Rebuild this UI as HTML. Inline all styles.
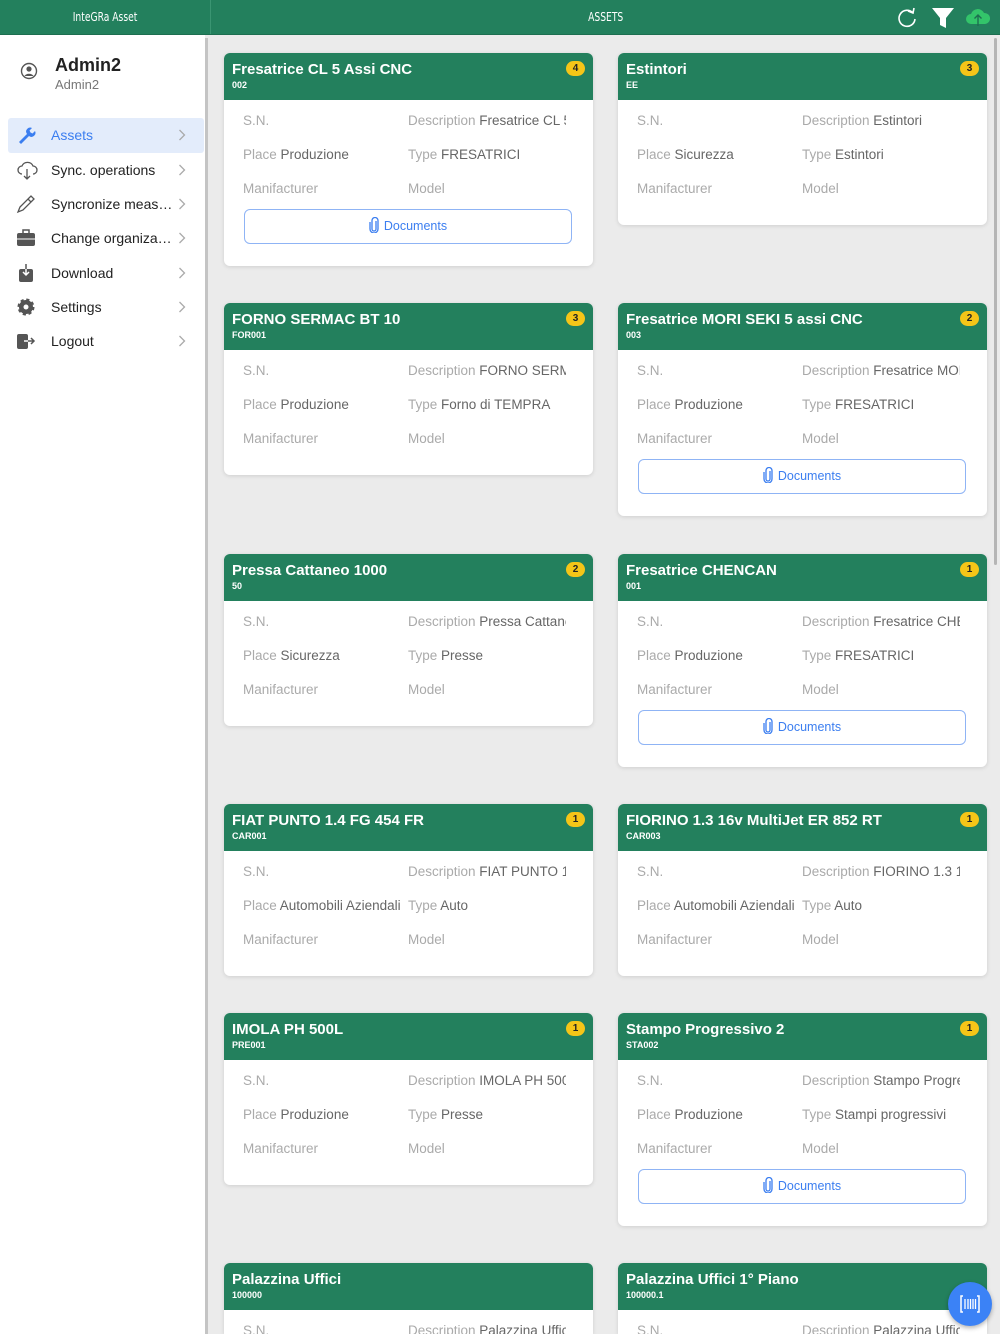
<!DOCTYPE html>
<html><head><meta charset="utf-8"><style>
*{box-sizing:border-box;margin:0;padding:0}
html,body{width:1000px;height:1334px;overflow:hidden}
body{background:#ebebeb;font-family:"Liberation Sans",sans-serif;position:relative}
.top{position:absolute;left:0;top:0;width:1000px;height:35px;background:#23805d;border-bottom:1px solid #1d6e50;z-index:2}
.top .l{position:absolute;left:0;width:211px;height:34px;border-right:1px solid #3a9572;color:#fff;font-size:12px;text-align:center;line-height:34px}
.top .l span{display:inline-block;transform:scaleX(.85);font-family:"DejaVu Sans Condensed","Liberation Sans Narrow",sans-serif}
.top .c{position:absolute;left:211px;right:0;text-align:center;color:#fff;font-size:11px;line-height:34px}
.top .c span{display:inline-block;transform:scaleX(.85);font-family:"DejaVu Sans Condensed",sans-serif;font-size:12px}
.side{position:absolute;left:0;top:35px;width:205px;height:1299px;background:#fff}
.sbar{position:absolute;left:205px;top:38px;width:3px;height:1296px;background:#c4c4c4}
.rbar{position:absolute;left:994px;top:38px;width:3px;height:527px;background:#b5b5b5;border-radius:2px}
.user{position:absolute;left:55px;top:55px}
.user b{font-size:18px;color:#222;display:block}
.user span{font-size:13px;color:#777}
.mi{position:absolute;left:8px;width:196px;height:34px;font-size:14px;color:#222;line-height:34px;padding-left:43px}
.mi.act{background:#e3ecfb;color:#3b7ef0;border-radius:3px}
.mi .ch{position:absolute;right:18px;top:11px}
.mi svg.ic{position:absolute;left:8px;top:7px}
.card{position:absolute;width:369px;background:#fff;border-radius:6px;box-shadow:0 1px 4px rgba(0,0,0,.12);overflow:hidden}
.hd{height:47px;background:#23805d;padding:8px 8px 0 8px;color:#fff;position:relative}
.hd b{font-size:15px;display:block}
.hd small{font-size:9px;font-weight:bold;display:block;margin-top:2px}
.bd{position:absolute;right:8px;top:8px;background:#f5c518;color:#222;font-size:10px;font-weight:bold;border-radius:8px;width:19px;height:15px;text-align:center;line-height:15px}
.row{position:absolute;font-size:13.5px;color:#666;white-space:nowrap;overflow:hidden}
.row i{font-style:normal;color:#aaa}
.doc{position:absolute;left:20px;width:328px;height:35px;border:1px solid #8fb4f5;border-radius:6px;color:#3b7ef0;font-size:12.5px;text-align:center;line-height:33px}
.doc svg{vertical-align:-3px;margin-right:5px}
.fab{position:absolute;left:948px;top:1282px;width:44px;height:44px;border-radius:50%;background:#3b82f6;box-shadow:0 2px 5px rgba(0,0,0,.3)}
</style></head><body>
<svg width="0" height="0" style="position:absolute"><defs>
<symbol id="clip" viewBox="0 0 10 16"><path d="M7 4v8a2 2 0 0 1-4 0V3.5a3 3 0 0 1 6 0V12a4 4 0 0 1-8 0V5" fill="none" stroke="#3b7ef0" stroke-width="1.3"/></symbol>
<symbol id="chev" viewBox="0 0 8 12"><path d="M1.5 1l5 5-5 5" fill="none" stroke="#aaa" stroke-width="1.3"/></symbol>
</defs></svg>
<div class="top"><div class="l"><span>InteGRa Asset</span></div><div class="c"><span>ASSETS</span></div>
<svg style="position:absolute;left:896px;top:7px" width="22" height="22" viewBox="0 0 22 22"><path d="M17 6A8 8 0 1 0 19 12" fill="none" stroke="#fff" stroke-width="1.6"/><path d="M12 4l5 2 1-5" fill="none" stroke="#fff" stroke-width="1.6"/></svg>
<svg style="position:absolute;left:931px;top:7px" width="24" height="22" viewBox="0 0 24 22"><path d="M1 1h22l-8 10v10l-6-3v-7z" fill="#fff"/></svg>
<svg style="position:absolute;left:964px;top:6px" width="28" height="22" viewBox="0 0 28 22"><path d="M7 18a5 5 0 0 1 0-10 7 7 0 0 1 13-1 5.5 5.5 0 0 1 1 11z" fill="#33c46a"/><path d="M14 20V9m-3.5 3.5L14 9l3.5 3.5" fill="none" stroke="#1d6e50" stroke-width="1.4"/></svg>
</div>
<div class="side">
<svg style="position:absolute;left:20px;top:27px" width="18" height="18" viewBox="0 0 18 18"><circle cx="9" cy="9" r="7.5" fill="none" stroke="#555" stroke-width="1.4"/><circle cx="9" cy="7" r="2.6" fill="#555"/><path d="M4.5 14a5 4 0 0 1 9 0" fill="#555"/></svg>
</div>
<div class="user"><b>Admin2</b><span>Admin2</span></div>
<div class="mi act" style="top:118px;height:35px">Assets<svg class="ch" width="8" height="12"><use href="#chev"/></svg><svg class="ic" width="20" height="20" viewBox="0 0 20 20"><path d="M3 17l8-8a4 4 0 0 1 5-6l-2.5 2.5 1 2 2 1L19 6a4 4 0 0 1-6 5l-8 8z" fill="#3b7ef0"/></svg></div>
<div class="mi" style="top:153px">Sync. operations<svg class="ch" width="8" height="12"><use href="#chev"/></svg><svg class="ic" width="22" height="20" viewBox="0 0 22 20"><path d="M6 14a4 4 0 0 1 0-8 6 6 0 0 1 11 0 4 4 0 0 1 0 8" fill="none" stroke="#555" stroke-width="1.3"/><path d="M11 9v10m-3-3l3 3 3-3" fill="none" stroke="#555" stroke-width="1.3"/></svg></div>
<div class="mi" style="top:187px">Syncronize meas…<svg class="ch" width="8" height="12"><use href="#chev"/></svg><svg class="ic" width="20" height="20" viewBox="0 0 20 20"><path d="M2 18l2-5 8-8 3 3-8 8zM12 5l3-3 3 3-3 3" fill="none" stroke="#555" stroke-width="1.3"/></svg></div>
<div class="mi" style="top:221px">Change organiza…<svg class="ch" width="8" height="12"><use href="#chev"/></svg><svg class="ic" width="20" height="20" viewBox="0 0 20 20"><rect x="1" y="5" width="18" height="13" rx="2" fill="#555"/><rect x="7" y="2" width="6" height="4" fill="none" stroke="#555" stroke-width="1.5"/><path d="M1 11h18" stroke="#fff"/></svg></div>
<div class="mi" style="top:256px">Download<svg class="ch" width="8" height="12"><use href="#chev"/></svg><svg class="ic" width="20" height="20" viewBox="0 0 20 20"><rect x="3" y="6" width="14" height="13" rx="2" fill="#555"/><path d="M10 1v11m-3-3l3 3 3-3" fill="none" stroke="#fff" stroke-width="1.5"/><path d="M10 1v5" stroke="#555" stroke-width="1.5"/></svg></div>
<div class="mi" style="top:290px">Settings<svg class="ch" width="8" height="12"><use href="#chev"/></svg><svg class="ic" width="20" height="20" viewBox="0 0 20 20"><circle cx="10" cy="10" r="7" fill="#555" stroke="#555" stroke-width="3" stroke-dasharray="3 2.5"/><circle cx="10" cy="10" r="2.5" fill="#fff"/></svg></div>
<div class="mi" style="top:324px">Logout<svg class="ch" width="8" height="12"><use href="#chev"/></svg><svg class="ic" width="20" height="20" viewBox="0 0 20 20"><rect x="1" y="3" width="11" height="15" rx="2" fill="#555"/><path d="M8 10h10m-3-3l3 3-3 3" fill="none" stroke="#555" stroke-width="1.5"/><path d="M8 10h4" stroke="#fff" stroke-width="1.5"/></svg></div>
<div class="sbar"></div>

<div class="card" style="left:224px;top:53px;height:213px"><div class="hd"><b>Fresatrice CL 5 Assi CNC</b><small>002</small><span class="bd">4</span></div>
<div class="row" style="left:19px;top:60px"><i>S.N.</i></div><div class="row" style="left:184px;top:60px;width:158px"><i>Description</i> Fresatrice CL 5</div>
<div class="row" style="left:19px;top:94px"><i>Place</i> Produzione</div><div class="row" style="left:184px;top:94px;width:158px"><i>Type</i> FRESATRICI</div>
<div class="row" style="left:19px;top:128px"><i>Manifacturer</i></div><div class="row" style="left:184px;top:128px"><i>Model</i></div>
<div class="doc" style="top:156px"><svg width="10" height="16"><use href="#clip"/></svg>Documents</div></div>

<div class="card" style="left:618px;top:53px;height:172px"><div class="hd"><b>Estintori</b><small>EE</small><span class="bd">3</span></div>
<div class="row" style="left:19px;top:60px"><i>S.N.</i></div><div class="row" style="left:184px;top:60px;width:158px"><i>Description</i> Estintori</div>
<div class="row" style="left:19px;top:94px"><i>Place</i> Sicurezza</div><div class="row" style="left:184px;top:94px;width:158px"><i>Type</i> Estintori</div>
<div class="row" style="left:19px;top:128px"><i>Manifacturer</i></div><div class="row" style="left:184px;top:128px"><i>Model</i></div></div>

<div class="card" style="left:224px;top:303px;height:172px"><div class="hd"><b>FORNO SERMAC BT 10</b><small>FOR001</small><span class="bd">3</span></div>
<div class="row" style="left:19px;top:60px"><i>S.N.</i></div><div class="row" style="left:184px;top:60px;width:158px"><i>Description</i> FORNO SERMAC</div>
<div class="row" style="left:19px;top:94px"><i>Place</i> Produzione</div><div class="row" style="left:184px;top:94px;width:158px"><i>Type</i> Forno di TEMPRA</div>
<div class="row" style="left:19px;top:128px"><i>Manifacturer</i></div><div class="row" style="left:184px;top:128px"><i>Model</i></div></div>

<div class="card" style="left:618px;top:303px;height:213px"><div class="hd"><b>Fresatrice MORI SEKI 5 assi CNC</b><small>003</small><span class="bd">2</span></div>
<div class="row" style="left:19px;top:60px"><i>S.N.</i></div><div class="row" style="left:184px;top:60px;width:158px"><i>Description</i> Fresatrice MORI</div>
<div class="row" style="left:19px;top:94px"><i>Place</i> Produzione</div><div class="row" style="left:184px;top:94px;width:158px"><i>Type</i> FRESATRICI</div>
<div class="row" style="left:19px;top:128px"><i>Manifacturer</i></div><div class="row" style="left:184px;top:128px"><i>Model</i></div>
<div class="doc" style="top:156px"><svg width="10" height="16"><use href="#clip"/></svg>Documents</div></div>

<div class="card" style="left:224px;top:554px;height:172px"><div class="hd"><b>Pressa Cattaneo 1000</b><small>50</small><span class="bd">2</span></div>
<div class="row" style="left:19px;top:60px"><i>S.N.</i></div><div class="row" style="left:184px;top:60px;width:158px"><i>Description</i> Pressa Cattaneo</div>
<div class="row" style="left:19px;top:94px"><i>Place</i> Sicurezza</div><div class="row" style="left:184px;top:94px;width:158px"><i>Type</i> Presse</div>
<div class="row" style="left:19px;top:128px"><i>Manifacturer</i></div><div class="row" style="left:184px;top:128px"><i>Model</i></div></div>

<div class="card" style="left:618px;top:554px;height:213px"><div class="hd"><b>Fresatrice CHENCAN</b><small>001</small><span class="bd">1</span></div>
<div class="row" style="left:19px;top:60px"><i>S.N.</i></div><div class="row" style="left:184px;top:60px;width:158px"><i>Description</i> Fresatrice CHEN</div>
<div class="row" style="left:19px;top:94px"><i>Place</i> Produzione</div><div class="row" style="left:184px;top:94px;width:158px"><i>Type</i> FRESATRICI</div>
<div class="row" style="left:19px;top:128px"><i>Manifacturer</i></div><div class="row" style="left:184px;top:128px"><i>Model</i></div>
<div class="doc" style="top:156px"><svg width="10" height="16"><use href="#clip"/></svg>Documents</div></div>

<div class="card" style="left:224px;top:804px;height:172px"><div class="hd"><b>FIAT PUNTO 1.4 FG 454 FR</b><small>CAR001</small><span class="bd">1</span></div>
<div class="row" style="left:19px;top:60px"><i>S.N.</i></div><div class="row" style="left:184px;top:60px;width:158px"><i>Description</i> FIAT PUNTO 1.4</div>
<div class="row" style="left:19px;top:94px"><i>Place</i> Automobili Aziendali</div><div class="row" style="left:184px;top:94px;width:158px"><i>Type</i> Auto</div>
<div class="row" style="left:19px;top:128px"><i>Manifacturer</i></div><div class="row" style="left:184px;top:128px"><i>Model</i></div></div>

<div class="card" style="left:618px;top:804px;height:172px"><div class="hd"><b>FIORINO 1.3 16v MultiJet ER 852 RT</b><small>CAR003</small><span class="bd">1</span></div>
<div class="row" style="left:19px;top:60px"><i>S.N.</i></div><div class="row" style="left:184px;top:60px;width:158px"><i>Description</i> FIORINO 1.3 16v</div>
<div class="row" style="left:19px;top:94px"><i>Place</i> Automobili Aziendali</div><div class="row" style="left:184px;top:94px;width:158px"><i>Type</i> Auto</div>
<div class="row" style="left:19px;top:128px"><i>Manifacturer</i></div><div class="row" style="left:184px;top:128px"><i>Model</i></div></div>

<div class="card" style="left:224px;top:1013px;height:172px"><div class="hd"><b>IMOLA PH 500L</b><small>PRE001</small><span class="bd">1</span></div>
<div class="row" style="left:19px;top:60px"><i>S.N.</i></div><div class="row" style="left:184px;top:60px;width:158px"><i>Description</i> IMOLA PH 500L</div>
<div class="row" style="left:19px;top:94px"><i>Place</i> Produzione</div><div class="row" style="left:184px;top:94px;width:158px"><i>Type</i> Presse</div>
<div class="row" style="left:19px;top:128px"><i>Manifacturer</i></div><div class="row" style="left:184px;top:128px"><i>Model</i></div></div>

<div class="card" style="left:618px;top:1013px;height:213px"><div class="hd"><b>Stampo Progressivo 2</b><small>STA002</small><span class="bd">1</span></div>
<div class="row" style="left:19px;top:60px"><i>S.N.</i></div><div class="row" style="left:184px;top:60px;width:158px"><i>Description</i> Stampo Progressivo</div>
<div class="row" style="left:19px;top:94px"><i>Place</i> Produzione</div><div class="row" style="left:184px;top:94px;width:158px"><i>Type</i> Stampi progressivi</div>
<div class="row" style="left:19px;top:128px"><i>Manifacturer</i></div><div class="row" style="left:184px;top:128px"><i>Model</i></div>
<div class="doc" style="top:156px"><svg width="10" height="16"><use href="#clip"/></svg>Documents</div></div>

<div class="card" style="left:224px;top:1263px;height:71px;border-radius:6px 6px 0 0"><div class="hd"><b>Palazzina Uffici</b><small>100000</small></div>
<div class="row" style="left:19px;top:60px"><i>S.N.</i></div><div class="row" style="left:184px;top:60px;width:158px"><i>Description</i> Palazzina Uffici</div></div>

<div class="card" style="left:618px;top:1263px;height:71px;border-radius:6px 6px 0 0"><div class="hd"><b>Palazzina Uffici 1° Piano</b><small>100000.1</small></div>
<div class="row" style="left:19px;top:60px"><i>S.N.</i></div><div class="row" style="left:184px;top:60px;width:158px"><i>Description</i> Palazzina Uffici</div></div>

<div class="rbar"></div>
<div class="fab"><svg style="position:absolute;left:12px;top:13px" width="20" height="18" viewBox="0 0 20 18"><path d="M3 1H1v16h2M17 1h2v16h-2" fill="none" stroke="#fff" stroke-width="1.5"/><path d="M5 4v10M8 4v10M10.5 4v10M13 4v10M15.5 4v10" stroke="#fff" stroke-width="1.3"/></svg></div>
</body></html>
